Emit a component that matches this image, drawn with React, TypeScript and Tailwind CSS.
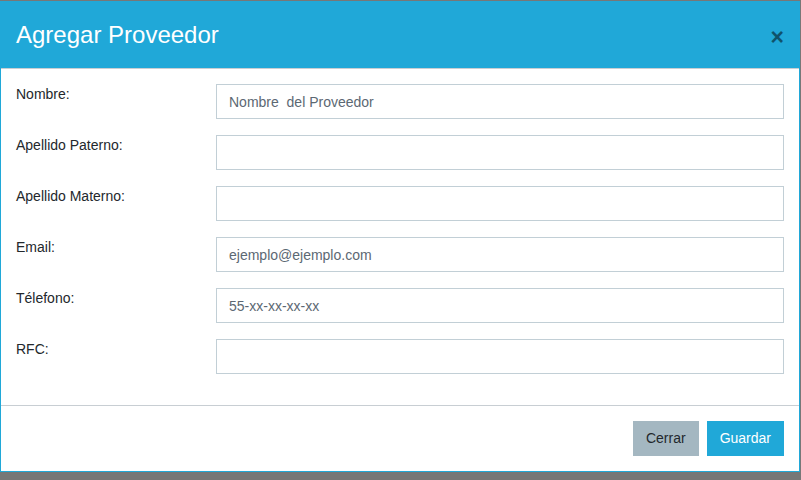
const fields = [
  { label: 'Nombre:', placeholder: 'Nombre  del Proveedor' },
  { label: 'Apellido Paterno:', placeholder: '' },
  { label: 'Apellido Materno:', placeholder: '' },
  { label: 'Email:', placeholder: 'ejemplo@ejemplo.com' },
  { label: 'Télefono:', placeholder: '55-xx-xx-xx-xx' },
  { label: 'RFC:', placeholder: '' },
];

export default function App() {
  return (
    <div className="h-screen w-full overflow-hidden bg-[#777777] pt-px font-['Liberation_Sans',Arial,sans-serif] text-[14px] text-[#23282c]">
      <div className="w-[800px] border border-[#20a8d8] bg-white">
        <div className="flex h-[67px] items-center justify-between border-b border-[#c8ced3] bg-[#20a8d8] pl-[15px] pr-[15px]">
          <h4 className="text-[24px] leading-[36px] text-white">Agregar Proveedor</h4>
          <button className="mt-[4px] text-[23px] font-bold leading-none text-black opacity-50">×</button>
        </div>

        <div className="px-[15px] pt-[15px] pb-[15px]">
          {fields.map((f) => (
            <div key={f.label} className="mb-4 flex">
              <label className="w-[200px] shrink-0 leading-[21px]">{f.label}</label>
              <input
                type="text"
                placeholder={f.placeholder}
                className="h-[35px] w-[568px] border border-[#c2cfd6] px-3 text-[14px] outline-none placeholder:text-[#5c6873]"
              />
            </div>
          ))}
        </div>

        <div className="flex justify-end gap-2 border-t border-[#c8ced3] px-[15px] pt-[15px] pb-[15px]">
          <button className="h-[35px] bg-[#a4b7c1] px-[13px] text-[#23282c]">Cerrar</button>
          <button className="h-[35px] bg-[#20a8d8] px-[13px] text-white">Guardar</button>
        </div>
      </div>
    </div>
  );
}
